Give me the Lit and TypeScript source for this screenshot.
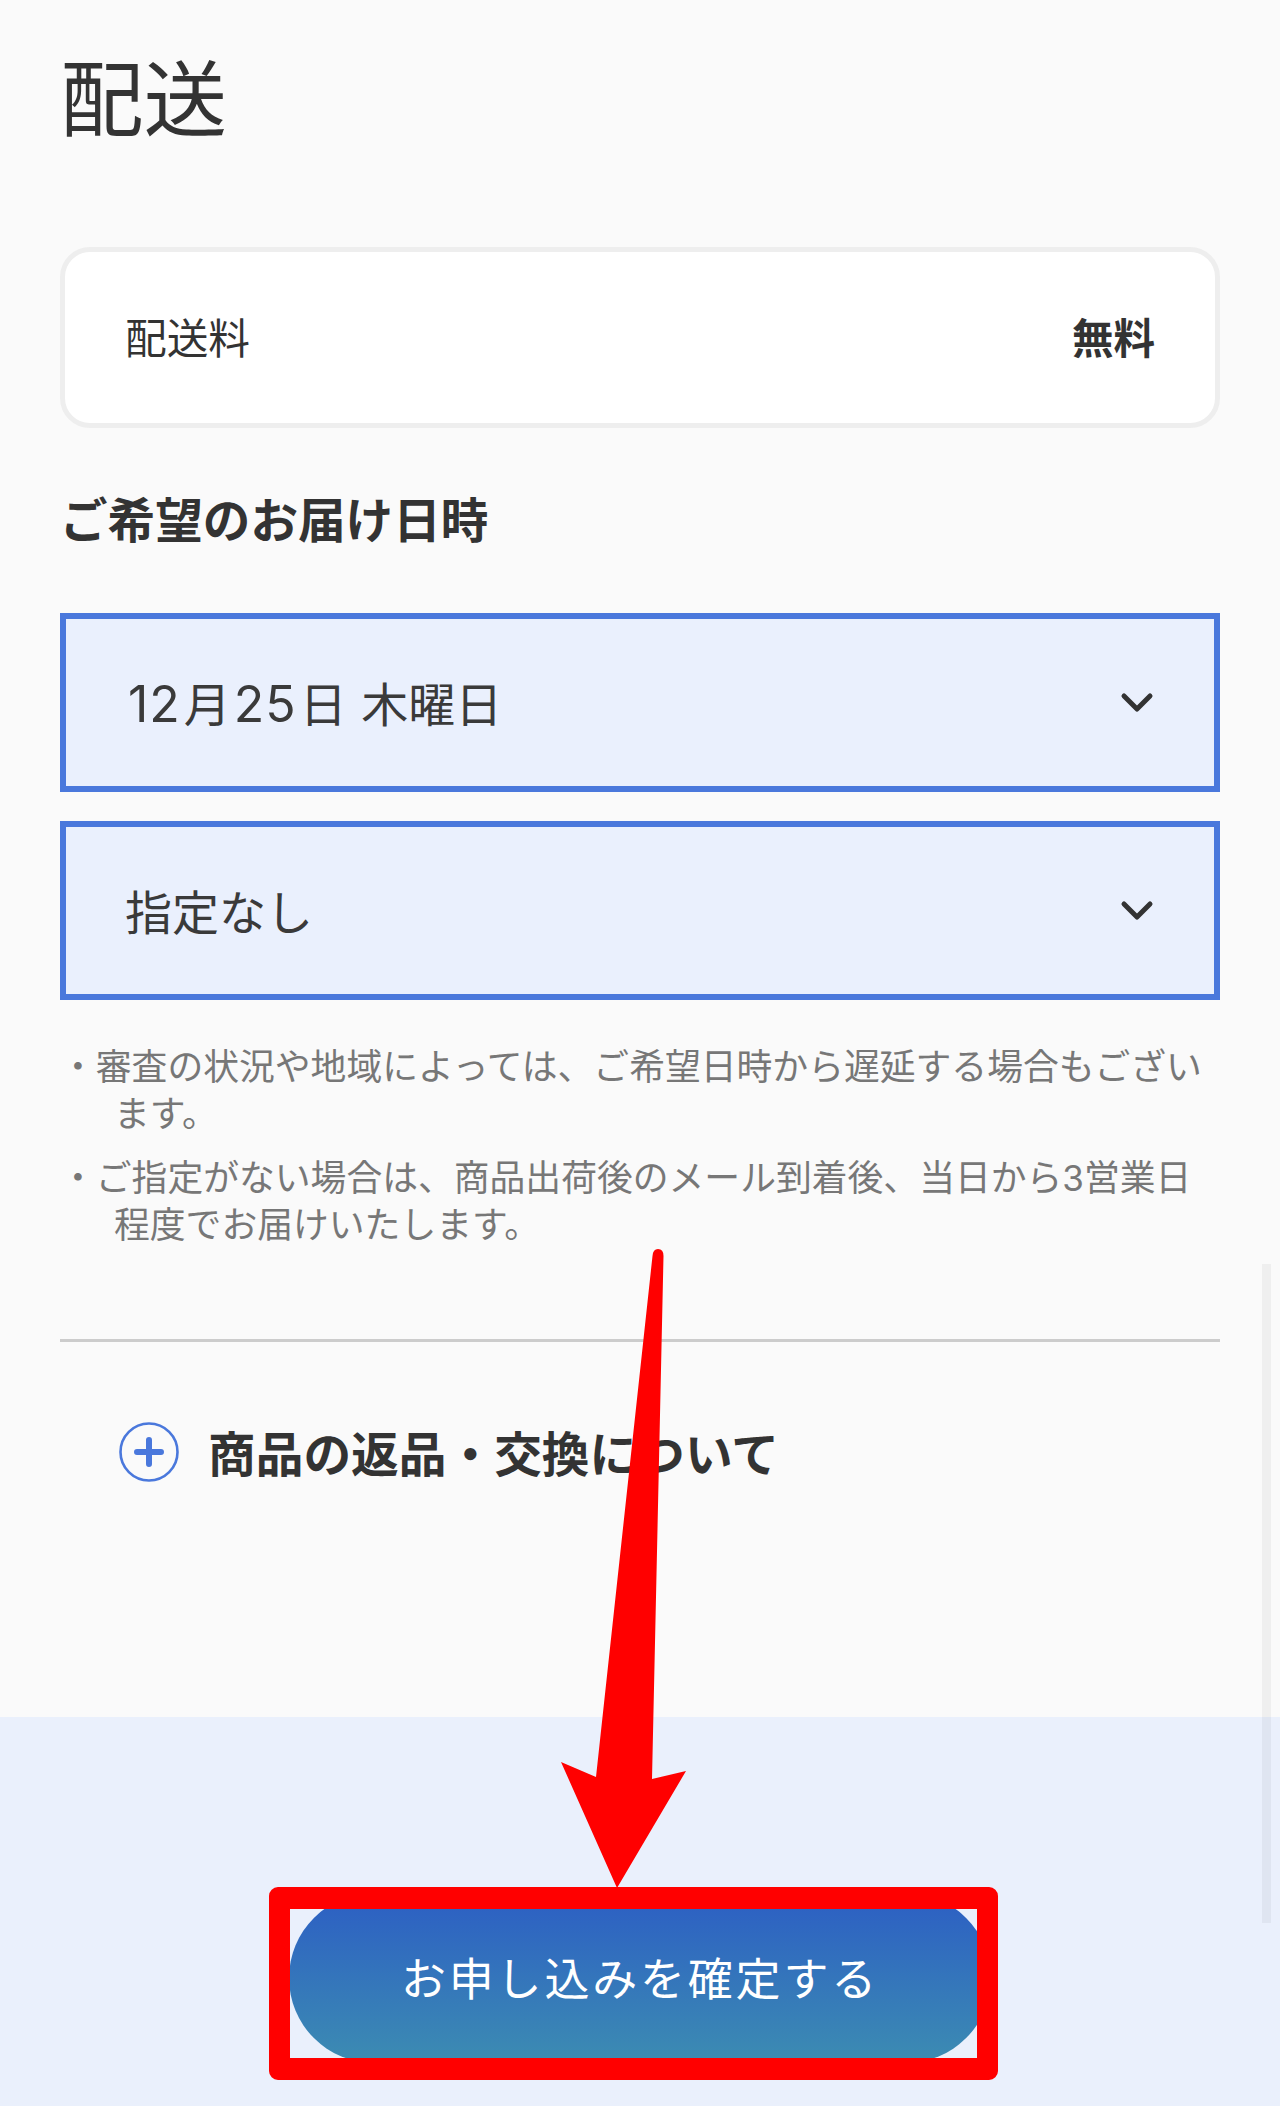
import { LitElement, html, css, svg } from "lit";
import { customElement } from "lit/decorators.js";

const chevron = html`<svg class="chev" viewBox="0 0 34 22" width="34" height="22" aria-hidden="true">
  <path d="M4 4 L17 17 L30 4" fill="none" stroke="#333" stroke-width="5" stroke-linecap="round" stroke-linejoin="round"/>
</svg>`;

@customElement("app-root")
export class AppRoot extends LitElement {
  static styles = css`
    :host {
      display: block;
      position: relative;
      width: 1280px;
      height: 2106px;
      overflow: hidden;
      background: #fafafa;
      color: #333;
      font-family: "Noto Sans CJK JP", "Noto Sans", sans-serif;
    }
    .main {
      height: 1717px;
      box-sizing: border-box;
      padding: 54px 60px 0;
      display: flex;
      flex-direction: column;
    }
    h1 {
      margin: 0 0 113px 0;
      font-size: 83.5px;
      line-height: 80px;
      font-weight: 400;
    }
    .card {
      height: 181px;
      box-sizing: border-box;
      background: #fff;
      border: 5px solid #eeeeee;
      border-radius: 30px;
      display: flex;
      align-items: center;
      justify-content: space-between;
      padding: 0 60px;
      font-size: 41.7px;
      line-height: 60px;
    }
    .card span,
    .card b { position: relative; top: -2px; }
    .card b { font-weight: 700; font-size: 41.5px; }
    h2 {
      margin: 62px 0 67px 0;
      font-size: 47.6px;
      line-height: 56px;
      font-weight: 700;
    }
    .select {
      height: 179px;
      box-sizing: border-box;
      background: #eaf0fd;
      border: 6px solid #4a78dc;
      display: flex;
      align-items: center;
      justify-content: space-between;
      padding: 0 60px 0 59px;
      font-size: 47px;
      line-height: 60px;
      color: #3a3a3a;
    }
    .select + .select { margin-top: 29px; }
    .select span { position: relative; top: -1px; word-spacing: 4px; }
    .select i {
      font-style: normal;
      font-family: "Inter", "Noto Sans CJK JP", sans-serif;
      font-size: 50px;
      line-height: 1;
      letter-spacing: 1px;
      margin: 0 3px;
    }
    .chev { margin-top: 1px; }
    .notes {
      list-style: none;
      margin: 41px 0 0;
      padding: 0 15px 0 0;
      font-size: 35.8px;
      line-height: 47px;
      color: #777;
    }
    .notes li {
      padding-left: 54px;
      text-indent: -54px;
    }
    .notes li + li { margin-top: 16.5px; }
    .notes .line { display: block; }
    .notes .line + .line { text-indent: 0; }
    .notes i {
      font-style: normal;
      font-family: "Inter", sans-serif;
      font-size: 35px;
      line-height: 1;
    }
    hr {
      border: 0;
      height: 3px;
      background: #cccccc;
      margin: 93.5px 0 0;
    }
    .accordion {
      display: flex;
      align-items: center;
      gap: 29px;
      margin-top: 80px;
      padding-left: 59px;
      font-size: 47.7px;
      line-height: 60px;
      font-weight: 700;
    }
    .footer {
      height: 389px;
      box-sizing: border-box;
      background: #eaf0fc;
      padding-top: 176px;
      display: flex;
      justify-content: center;
    }
    .confirm {
      width: 702px;
      height: 170px;
      border: 0;
      border-radius: 85px;
      background: linear-gradient(180deg, #2c5ec4 0%, #3c8cb2 100%);
      color: #fff;
      font: inherit;
      font-size: 45px;
      letter-spacing: 2.8px;
      padding: 0 0 4px;
    }
    .scrollbar {
      position: absolute;
      left: 1262px;
      top: 1264px;
      width: 9px;
      height: 659px;
      background: rgba(0, 0, 0, 0.045);
    }
    .highlight {
      position: absolute;
      left: 269px;
      top: 1887px;
      width: 729px;
      height: 193px;
      box-sizing: border-box;
      border: solid #ff0000;
      border-width: 22px 21px;
      border-radius: 9px;
    }
    .arrow {
      position: absolute;
      left: 0;
      top: 0;
      pointer-events: none;
    }
  `;

  render() {
    return html`
      <div class="main">
        <h1>配送</h1>
        <div class="card"><span>配送料</span><b>無料</b></div>
        <h2>ご希望のお届け日時</h2>
        <div class="select"><span><i>12</i>月<i>25</i>日 木曜日</span>${chevron}</div>
        <div class="select"><span>指定なし</span>${chevron}</div>
        <ul class="notes">
          <li>・審査の状況や地域によっては、ご希望日時から遅延する場合もございます。</li>
          <li>
            <span class="line">・ご指定がない場合は、商品出荷後のメール到着後、当日から<i>3</i>営業日</span>
            <span class="line">程度でお届けいたします。</span>
          </li>
        </ul>
        <hr />
        <div class="accordion">
          <svg viewBox="0 0 60 60" width="60" height="60" aria-hidden="true">
            <circle cx="30" cy="30" r="28.5" fill="none" stroke="#4a78dc" stroke-width="2.6"/>
            <path d="M18 30 H42 M30 18 V42" fill="none" stroke="#4a78dc" stroke-width="6" stroke-linecap="round"/>
          </svg>
          <span>商品の返品・交換について</span>
        </div>
      </div>
      <div class="footer">
        <button class="confirm">お申し込みを確定する</button>
      </div>
      <div class="scrollbar"></div>
      <div class="highlight"></div>
      <svg class="arrow" width="1280" height="2106" viewBox="0 0 1280 2106" aria-hidden="true">
        ${svg`<path d="M652.5 1256 Q653 1249 658 1249 Q663.5 1249 663.5 1256 L652 1779 L686 1771 L617 1888 L561 1762 L596 1777 Z" fill="#ff0000"/>`}
      </svg>
    `;
  }
}
